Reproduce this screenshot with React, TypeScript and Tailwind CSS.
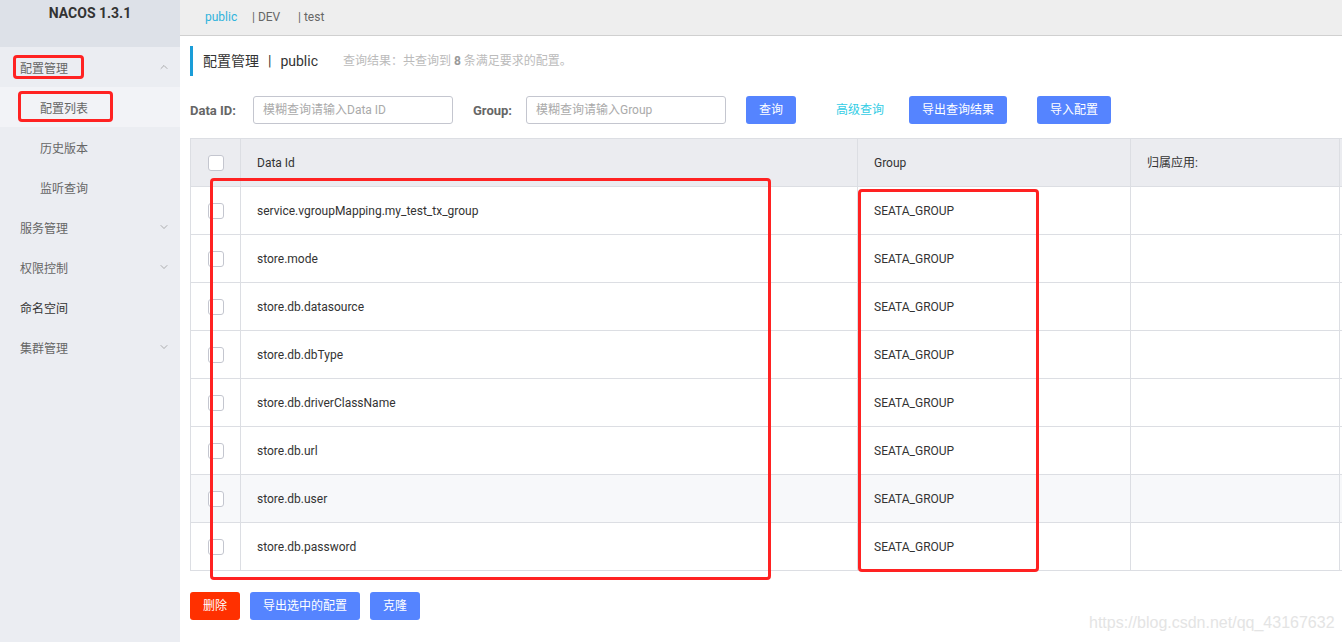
import { ChevronDown, ChevronUp } from "lucide-react";

const rows = [
  "service.vgroupMapping.my_test_tx_group",
  "store.mode",
  "store.db.datasource",
  "store.db.dbType",
  "store.db.driverClassName",
  "store.db.url",
  "store.db.user",
  "store.db.password",
];

const font = "font-['Roboto','Noto_Sans_CJK_SC',sans-serif]";

function Checkbox() {
  return <div className="w-4 h-4 rounded-[3px] border border-[#c4c6cf] bg-white" />;
}

function MenuItem({ label, sub, open, active, dark }: { label: string; sub?: boolean; open?: boolean; active?: boolean; dark?: boolean }) {
  return (
    <div className={`h-10 flex items-center justify-between pr-[10px] pt-[4px] ${sub ? "pl-10" : "pl-5"} ${active ? "bg-[#f2f3f7]" : ""}`}>
      <span className={`text-[12px] ${dark ? "text-[#333]" : "text-[#666]"}`}>{label}</span>
      {open === true && <ChevronUp size={12} strokeWidth={1.3} className="text-[#888] -mt-[4px]" />}
      {open === false && <ChevronDown size={12} strokeWidth={1.3} className="text-[#888] -mt-[4px]" />}
    </div>
  );
}

function Sidebar() {
  return (
    <div className="w-[180px] shrink-0 bg-[#ebedf2] flex flex-col">
      <div className="h-[47px] bg-[#dde1e8] flex justify-center pt-[3px]">
        <span className="text-[14px] font-bold text-[#333]">NACOS 1.3.1</span>
      </div>
      <MenuItem label="配置管理" open={true} />
      <MenuItem label="配置列表" sub active />
      <MenuItem label="历史版本" sub />
      <MenuItem label="监听查询" sub />
      <MenuItem label="服务管理" open={false} />
      <MenuItem label="权限控制" open={false} />
      <MenuItem label="命名空间" dark />
      <MenuItem label="集群管理" open={false} />
    </div>
  );
}

function BlueButton({ label, w }: { label: string; w: string }) {
  return (
    <div className={`${w} h-7 rounded-[3px] bg-[#5584ff] text-white text-[12px] flex items-center justify-center`}>
      {label}
    </div>
  );
}

export default function App() {
  return (
    <div className={`relative w-[1342px] h-[642px] overflow-hidden flex bg-white ${font}`}>
      <Sidebar />

      <div className="flex-1 flex flex-col overflow-hidden">
        {/* namespace tabs */}
        <div className="h-[36px] shrink-0 bg-[#eeeeee] border-b border-[#d0d0d0] flex items-center pl-[25px] pb-[1px] text-[12px] text-[#666]">
          <span className="text-[#2fb3dc] w-[47px]">public</span>
          <span className="w-[46px]">| DEV</span>
          <span>| test</span>
        </div>

        <div className="pl-[10px] flex flex-col">
          {/* title */}
          <div className="mt-[10px] h-[30px] border-l-[3px] border-[#1a9dd8] flex items-center pl-[10px]">
            <span className="text-[14px] text-[#333]">配置管理</span>
            <span className="text-[14px] text-[#333] mx-[9px]">|</span>
            <span className="text-[14px] text-[#333]">public</span>
            <span className="ml-[25px] text-[12px] text-[#bbbbbb]">
              查询结果：共查询到 <b className="text-[#999]">8</b> 条满足要求的配置。
            </span>
          </div>

          {/* filters */}
          <div className="mt-[20px] h-7 flex items-center">
            <span className="text-[13px] font-bold text-[#666] w-[63px] pt-[2px]">Data ID:</span>
            <div className="w-[200px] h-7 border border-[#c4c6cf] rounded-[3px] flex items-center pl-[9px] text-[12px] text-[#aaa]">
              模糊查询请输入Data ID
            </div>
            <span className="ml-[20px] text-[13px] font-bold text-[#666] w-[53px] pt-[2px]">Group:</span>
            <div className="w-[200px] h-7 border border-[#c4c6cf] rounded-[3px] flex items-center pl-[9px] text-[12px] text-[#aaa]">
              模糊查询请输入Group
            </div>
            <div className="ml-[20px]"><BlueButton label="查询" w="w-[50px]" /></div>
            <span className="ml-[40px] text-[12px] text-[#33cde5] w-[73px]">高级查询</span>
            <BlueButton label="导出查询结果" w="w-[98px]" />
            <div className="ml-[30px]"><BlueButton label="导入配置" w="w-[74px]" /></div>
          </div>

          {/* table */}
          <div className="mt-[14px] w-[1300px] border-l border-t border-[#dcdee3] text-[12px] text-[#333]">
            <div className="grid grid-cols-[50px_617px_273px_209px_151px] h-[48px] bg-[#ebecf0] border-b border-[#dcdee3]">
              <div className="border-r border-[#dcdee3] flex items-center justify-center"><Checkbox /></div>
              <div className="border-r border-[#dcdee3] flex items-center pl-4">Data Id</div>
              <div className="border-r border-[#dcdee3] flex items-center pl-4">Group</div>
              <div className="border-r border-[#dcdee3] flex items-center pl-4">归属应用:</div>
              <div />
            </div>
            {rows.map((r, i) => (
              <div
                key={r}
                className={`grid grid-cols-[50px_617px_273px_209px_151px] h-[48px] border-b border-[#dcdee3] ${i === 6 ? "bg-[#f7f8fa]" : ""}`}
              >
                <div className="border-r border-[#dcdee3] flex items-center justify-center"><Checkbox /></div>
                <div className="border-r border-[#dcdee3] flex items-center pl-4">{r}</div>
                <div className="border-r border-[#dcdee3] flex items-center pl-4">SEATA_GROUP</div>
                <div className="border-r border-[#dcdee3]" />
                <div />
              </div>
            ))}
          </div>

          {/* bottom actions */}
          <div className="mt-[21px] flex gap-[10px]">
            <div className="w-[50px] h-7 rounded-[3px] bg-[#ff3000] text-white text-[12px] flex items-center justify-center">删除</div>
            <BlueButton label="导出选中的配置" w="w-[110px]" />
            <BlueButton label="克隆" w="w-[50px]" />
          </div>
        </div>
      </div>

      {/* red annotation boxes */}
      <div className="absolute left-[13px] top-[55px] w-[71px] h-[24px] border-[3px] border-[#ff2222] rounded-[4px]" />
      <div className="absolute left-[18px] top-[91px] w-[95px] h-[31px] border-[3px] border-[#ff2222] rounded-[4px]" />
      <div className="absolute left-[210px] top-[178px] w-[561px] h-[402px] border-[3px] border-[#ff2222] rounded-[4px]" />
      <div className="absolute left-[858px] top-[189px] w-[181px] h-[383px] border-[3px] border-[#ff2222] rounded-[4px]" />

      {/* watermark */}
      <div className="absolute left-[1089px] top-[611px] text-[16px] text-[#e4e4e4] font-['Liberation_Sans',sans-serif]">
        https://blog.csdn.net/qq_43167632
      </div>
    </div>
  );
}
